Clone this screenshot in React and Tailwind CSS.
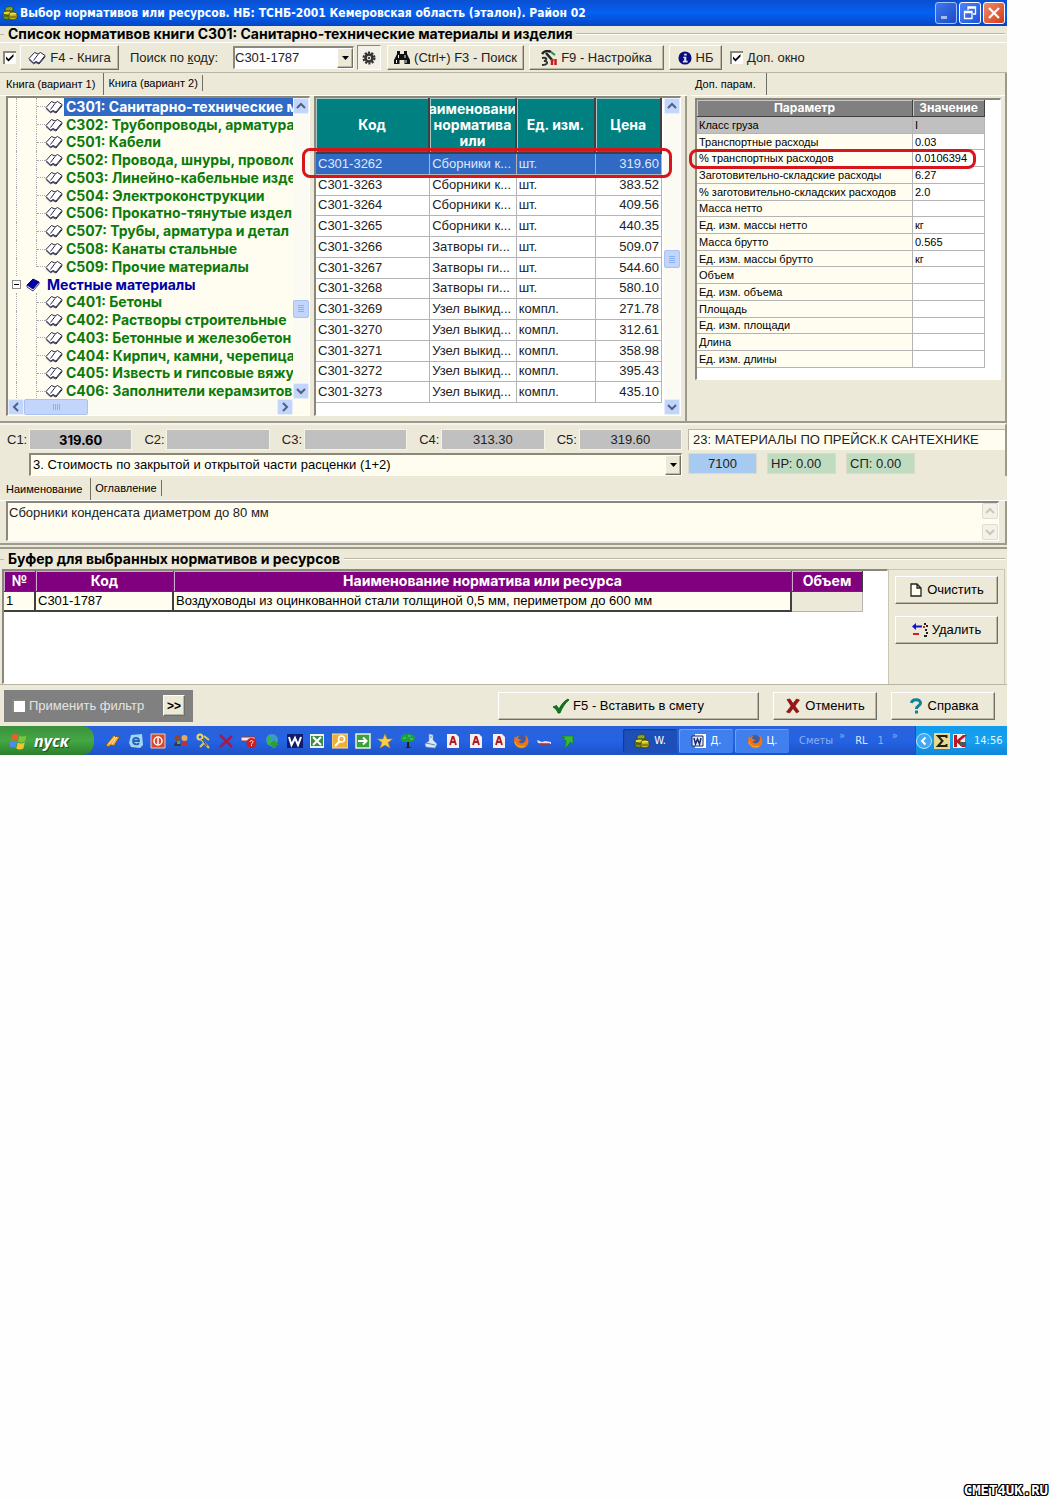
import { useState } from "react";

const TREE_TOP = [
  "С301: Санитарно-технические м",
  "С302: Трубопроводы, арматура",
  "С501: Кабели",
  "С502: Провода, шнуры, проволо",
  "С503: Линейно-кабельные изде",
  "С504: Электроконструкции",
  "С506: Прокатно-тянутые издел",
  "С507: Трубы, арматура и детал",
  "С508: Канаты стальные",
  "С509: Прочие материалы",
];

const TREE_LOCAL = [
  "С401: Бетоны",
  "С402: Растворы строительные",
  "С403: Бетонные и железобетон",
  "С404: Кирпич, камни, черепица",
  "С405: Известь и гипсовые вяжу",
  "С406: Заполнители керамзитов",
];

const ROWS = [
  ["С301-3262", "Сборники к...", "шт.", "319.60"],
  ["С301-3263", "Сборники к...", "шт.", "383.52"],
  ["С301-3264", "Сборники к...", "шт.", "409.56"],
  ["С301-3265", "Сборники к...", "шт.", "440.35"],
  ["С301-3266", "Затворы ги...", "шт.", "509.07"],
  ["С301-3267", "Затворы ги...", "шт.", "544.60"],
  ["С301-3268", "Затворы ги...", "шт.", "580.10"],
  ["С301-3269", "Узел выкид...", "компл.", "271.78"],
  ["С301-3270", "Узел выкид...", "компл.", "312.61"],
  ["С301-3271", "Узел выкид...", "компл.", "358.98"],
  ["С301-3272", "Узел выкид...", "компл.", "395.43"],
  ["С301-3273", "Узел выкид...", "компл.", "435.10"],
];

const PARAMS = [
  ["Класс груза", "I"],
  ["Транспортные расходы", "0.03"],
  ["% транспортных расходов", "0.0106394"],
  ["Заготовительно-складские расходы", "6.27"],
  ["% заготовительно-складских расходов", "2.0"],
  ["Масса нетто", ""],
  ["Ед. изм. массы нетто", "кг"],
  ["Масса брутто", "0.565"],
  ["Ед. изм. массы брутто", "кг"],
  ["Объем", ""],
  ["Ед. изм. объема", ""],
  ["Площадь", ""],
  ["Ед. изм. площади", ""],
  ["Длина", ""],
  ["Ед. изм. длины", ""],
];

const COSTS = [
  ["С1:", "319.60"],
  ["С2:", ""],
  ["С3:", ""],
  ["С4:", "313.30"],
  ["С5:", "319.60"],
];

const RAISED =
  "border border-t-white border-l-white border-r-[#716f64] border-b-[#716f64] bg-[#ece9d8] shadow-[inset_-1px_-1px_0_#bab7a6]";
const SUNKEN = "border-t-2 border-l-2 border-b border-r border-t-[#8a887c] border-l-[#8a887c] border-r-white border-b-white";
const BOLD = "font-['Inter','Liberation_Sans',sans-serif] text-[14px] leading-4 font-bold";

export default function App() {
  return (
    <div className="flex min-h-screen flex-col bg-[#fefefe] font-['Liberation_Sans',Arial,sans-serif] text-[13px] leading-4 text-[#222]">
      <div className="mr-[45px] flex flex-col bg-[#ece9d8]">
        <TitleBar />
        <Legend text="Список нормативов книги С301: Санитарно-технические материалы и изделия" />
        <Toolbar />
        <div className="flex">
          <div className="min-w-0 flex-1">
            <Tabs active="Книга (вариант 1)" other="Книга (вариант 2)" />
            <div className="flex h-[327px] gap-1 border-r-2 border-b-2 border-[#9c9a8c] pr-1 pl-1.5">
              <TreePanel />
              <PricePanel />
            </div>
          </div>
          <ParamPanel />
        </div>
        <CostPanel />
        <DescriptionPanel />
        <BufferPanel />
        <BottomBar />
        <TaskBar />
      </div>
      <footer className="mt-auto px-1 pb-0.5 text-right font-['DejaVu_Sans_Mono',monospace] text-[14px] leading-4 font-bold text-white [text-shadow:1px_0_0_#000,-1px_0_0_#000,0_1px_0_#000,0_-1px_0_#000,1px_1px_0_#000,-1px_-1px_0_#000,1px_-1px_0_#000,-1px_1px_0_#000]">
        CMET4UK.RU
      </footer>
    </div>
  );
}

function TitleBar() {
  return (
    <header className="flex h-[26px] items-center gap-0.5 bg-linear-to-b from-[#0a4fd0] via-[#0560f2] to-[#0446c4] pr-0.5 pl-0.5 text-white">
      <CoinsIcon />
      <h1 className="flex-1 truncate font-['DejaVu_Sans_Condensed','DejaVu_Sans',sans-serif] text-[12px] font-bold">
        Выбор нормативов или ресурсов. НБ: ТСНБ-2001 Кемеровская область (эталон). Район 02
      </h1>
      <div className="flex gap-0.5">
        <button type="button" aria-label="Свернуть" className="size-[22px] rounded-[3px] border border-[#a9c0f5] bg-linear-to-br from-[#3f78ee] to-[#1c48c8]">
          <svg viewBox="0 0 20 20" className="size-5"><path d="M5 13h6v3H5z" fill="#9fbcf5" /></svg>
        </button>
        <button type="button" aria-label="Восстановить" className="size-[22px] rounded-[3px] border border-white bg-linear-to-br from-[#4f86f4] to-[#1f50d8]">
          <svg viewBox="0 0 20 20" className="size-5" fill="none" stroke="#fff" strokeWidth="1.300">
            <path d="M8 7V4h7.500v7H13M8 5h7.500M4.500 8.500h7.500v7H4.500zM4.500 9.500H12" />
          </svg>
        </button>
        <button type="button" aria-label="Закрыть" className="size-[22px] rounded-[3px] border border-white bg-linear-to-br from-[#ee8a6a] to-[#d03a10]">
          <svg viewBox="0 0 20 20" className="size-5" stroke="#fff" strokeWidth="2.200"><path d="M5 5l10 10M15 5L5 15" /></svg>
        </button>
      </div>
    </header>
  );
}

function Legend({ text }) {
  return (
    <div className="flex h-4 items-center gap-1">
      <span className="h-px w-1 bg-[#b9b6a5]" />
      <h2 className={`whitespace-nowrap text-black ${BOLD}`}>{text}</h2>
      <span className="mr-0.5 h-0.5 flex-1 border-t border-[#b9b6a5] bg-white" />
    </div>
  );
}

function CheckBox({ label, children, defaultChecked }) {
  return (
    <label className="flex items-center gap-1">
      <span className="grid size-[13px] shrink-0 place-items-center">
        <input
          type="checkbox"
          aria-label={label}
          defaultChecked={defaultChecked}
          className="peer col-start-1 row-start-1 size-[13px] appearance-none border-t-2 border-l-2 border-[#8a887c] bg-white"
        />
        <svg viewBox="0 0 9 9" className="pointer-events-none col-start-1 row-start-1 hidden size-[9px] peer-checked:block">
          <path d="M1 3.500v2.500l2.500 2.500L8.500 3.500V1L3.500 6z" fill="#000" />
        </svg>
      </span>
      {children}
    </label>
  );
}

function Toolbar() {
  return (
    <div className="flex h-[31px] items-center border-t border-b border-t-white border-b-[#b9b6a5] pl-[3px] whitespace-nowrap">
      <CheckBox label="Показывать книгу" defaultChecked />
      <button type="button" className={`ml-1 flex h-[25px] w-[99px] items-center justify-center gap-1 ${RAISED}`}>
        <BookIcon />
        <span>F4 - Книга</span>
      </button>
      <label htmlFor="code" className="ml-[11px] w-[103px]">
        Поиск по <u>к</u>оду:
      </label>
      <div className={`flex h-[23px] w-[121px] items-center bg-white ${SUNKEN}`}>
        <input id="code" defaultValue="С301-1787" className="min-w-0 flex-1 bg-transparent outline-none" />
        <button type="button" aria-label="Открыть список" className={`flex h-full w-4 items-center justify-center ${RAISED}`}>
          <DownTriangle />
        </button>
      </div>
      <button type="button" aria-label="Параметры поиска" className="ml-[3px] flex h-[25px] w-6 items-center justify-center border border-t-[#8a887c] border-r-white border-b-white border-l-[#8a887c] bg-[#f4f2e8]">
        <GearIcon />
      </button>
      <button type="button" className={`ml-1.5 flex h-[25px] w-[137px] items-center justify-center gap-1 ${RAISED}`}>
        <BinocularsIcon />
        <span>(Ctrl+) F3 - Поиск</span>
      </button>
      <button type="button" className={`ml-[5px] flex h-[25px] w-[135px] items-center justify-center gap-1 ${RAISED}`}>
        <ToolsIcon />
        <span>F9 - Настройка</span>
      </button>
      <button type="button" className={`ml-[5px] flex h-[25px] w-[53px] items-center justify-center gap-1 ${RAISED}`}>
        <InfoIcon />
        <span>НБ</span>
      </button>
      <div className="ml-2">
        <CheckBox label="Доп. окно" defaultChecked>
          <span>
            <u>Д</u>оп. окно
          </span>
        </CheckBox>
      </div>
    </div>
  );
}

function Tabs({ active, other }) {
  return (
    <div className="flex h-[23px] items-start border-b border-white text-[11px] text-black">
      <button type="button" className="h-[22px] border-r border-[#716f64] pr-2 pl-1.5">
        {active}
      </button>
      <button type="button" className="mt-0.5 h-4 border-r border-[#716f64] pr-1 pl-1 leading-3">
        {other}
      </button>
    </div>
  );
}

function ScrollButton({ dir, muted }) {
  const turn = { up: "", down: "rotate-180", left: "-rotate-90", right: "rotate-90" }[dir];
  const names = { up: "Вверх", down: "Вниз", left: "Влево", right: "Вправо" };
  return (
    <button
      type="button"
      aria-label={names[dir]}
      className={`flex size-4 shrink-0 items-center justify-center rounded-xs border ${
        muted ? "border-[#dedccf] bg-[#f3f1e8]" : "border-[#e6edfb] bg-[#c3d5fb]"
      }`}
    >
      <svg viewBox="0 0 10 10" className={`size-2.5 ${turn}`} fill="none" stroke={muted ? "#c9c7ba" : "#4d6185"} strokeWidth="2">
        <path d="M1 7l4-4 4 4" />
      </svg>
    </button>
  );
}

function ScrollBar({ thumb }) {
  return (
    <div className="flex w-4 shrink-0 flex-col bg-[#fbfaf3]">
      <ScrollButton dir="up" />
      <div className="flex flex-1 flex-col">
        <div style={{ flexGrow: thumb }} />
        <div className="flex h-[18px] flex-col items-center justify-center gap-px rounded-xs border border-[#a9c1f3] bg-[#c3d5fb]">
          {[0, 1, 2, 3].map((n) => (
            <span key={n} className="h-px w-1.5 bg-[#8eb0f2]" />
          ))}
        </div>
        <div style={{ flexGrow: 100 - thumb }} />
      </div>
      <ScrollButton dir="down" />
    </div>
  );
}

function TreeItem({ text, selected, last }) {
  return (
    <li className="flex min-h-0 flex-1 items-stretch pl-2">
      <span className="w-5 shrink-0 border-l border-dotted border-[#aaa]" />
      <span className={`w-px shrink-0 border-l border-dotted border-[#aaa] ${last ? "h-1/2" : ""}`} />
      <span className="h-px w-2 shrink-0 self-center border-t border-dotted border-[#aaa]" />
      <span className="flex items-center">
        <BookIcon />
      </span>
      <span
        className={`ml-px flex flex-1 items-center overflow-hidden pl-0.5 whitespace-nowrap ${BOLD} ${
          selected ? "bg-[#316ac5] text-white" : "text-[#0b7a0b]"
        }`}
      >
        {text}
      </span>
    </li>
  );
}

function TreePanel() {
  return (
    <div className={`mb-[5px] flex w-[304px] shrink-0 flex-col bg-[#fffdf0] ${SUNKEN}`}>
      <div className="flex min-h-0 flex-1">
        <ul className="flex h-[302px] min-w-0 flex-1 flex-col overflow-hidden">
          {TREE_TOP.map((text, i) => (
            <TreeItem key={text} text={text} selected={i === 0} last={i === TREE_TOP.length - 1} />
          ))}
          <li className={`flex min-h-0 flex-1 items-center pl-1 text-[#0000a8] ${BOLD}`}>
            <button type="button" aria-label="Свернуть ветку" className="flex size-[9px] items-center justify-center border border-[#8a8a8a] bg-white">
              <span className="h-px w-[5px] bg-black" />
            </button>
            <span className="mr-1 ml-1">
              <BookIcon closed />
            </span>
            Местные материалы
          </li>
          {TREE_LOCAL.map((text) => (
            <TreeItem key={text} text={text} />
          ))}
        </ul>
        <ScrollBar thumb={74} />
      </div>
      <div className="mr-4 flex h-4 bg-[#fbfaf3]">
        <ScrollButton dir="left" />
        <div className="flex w-16 items-center justify-center gap-px rounded-xs border border-[#a9c1f3] bg-[#c3d5fb]">
          {[0, 1, 2, 3].map((n) => (
            <span key={n} className="h-1.5 w-px bg-[#8eb0f2]" />
          ))}
        </div>
        <div className="flex-1" />
        <ScrollButton dir="right" />
      </div>
    </div>
  );
}

function PricePanel() {
  const [current, setCurrent] = useState(0);
  const head = `border-r-2 border-b-2 border-[#404040] bg-[#008080] p-0 text-center text-white shadow-[inset_1px_1px_0_#a8c8c8] ${BOLD}`;

  return (
    <div className={`relative mb-[5px] flex min-w-0 flex-1 bg-white ${SUNKEN}`}>
      <div className="min-w-0 flex-1">
        <table className="h-[305px] w-full table-fixed border-separate border-spacing-0">
          <colgroup>
            <col className="w-[33%]" />
            <col className="w-[25%]" />
            <col className="w-[23%]" />
            <col className="w-[19%]" />
          </colgroup>
          <thead>
            <tr className="h-14">
              <th className={head}>Код</th>
              <th className={head}>
                <div className="flex flex-col items-center overflow-hidden whitespace-nowrap">
                  <span>аименовани</span>
                  <span>норматива</span>
                  <span>или</span>
                </div>
              </th>
              <th className={head}>Ед. изм.</th>
              <th className={head}>Цена</th>
            </tr>
          </thead>
          <tbody>
            {ROWS.map((row, i) => (
              <tr key={row[0]} onClick={() => setCurrent(i)} className={i === current ? "bg-[#316ac5] text-[#dfe8f8]" : ""}>
                {row.map((cell, c) => (
                  <td
                    key={c}
                    className={`overflow-hidden border-r border-b border-[#b4b4b4] px-0.5 py-0 whitespace-nowrap ${c === 3 ? "text-right" : ""}`}
                  >
                    {cell}
                  </td>
                ))}
              </tr>
            ))}
          </tbody>
        </table>
      </div>
      <div className="flex pl-0.5">
        <ScrollBar thumb={51} />
      </div>
      <div className="pointer-events-none absolute top-[50px] -left-3.5 h-[30px] w-[370px] rounded-lg border-3 border-[#d8141c]" />
    </div>
  );
}

function ParamPanel() {
  const head =
    "h-[17px] border-r border-b border-[#404040] bg-[#808080] p-0 text-center font-['Inter','Liberation_Sans',sans-serif] text-[12px] font-bold text-white shadow-[inset_1px_1px_0_#c8c8c8]";

  return (
    <div className="flex w-[320px] shrink-0 flex-col border-r-2 border-b-2 border-[#9c9a8c] pl-1">
      <div className="flex h-[23px] border-b border-white text-[11px] text-black">
        <button type="button" className="border-r border-[#716f64] pr-2.5 pl-1">
          Доп. парам.
        </button>
      </div>
      <div className={`relative mt-0.5 mr-1 ml-1 h-[282px] bg-white ${SUNKEN}`}>
        <table className="mr-4 h-[268px] w-[288px] table-fixed border-separate border-spacing-0 text-[11px] leading-3 text-black">
          <colgroup>
            <col className="w-3/4" />
            <col className="w-1/4" />
          </colgroup>
          <thead>
            <tr>
              <th className={head}>Параметр</th>
              <th className={head}>Значение</th>
            </tr>
          </thead>
          <tbody>
            {PARAMS.map(([name, value], i) => (
              <tr key={name} className={i === 0 ? "bg-[#c0c0c0]" : ""}>
                <td className={`border-r border-b border-[#b4b4b4] px-0.5 py-0 whitespace-nowrap ${i === 0 ? "" : "bg-[#fffdf0]"}`}>{name}</td>
                <td className="border-r border-b border-[#b4b4b4] px-0.5 py-0">{value}</td>
              </tr>
            ))}
          </tbody>
        </table>
        <div className="pointer-events-none absolute top-[49px] -left-2 h-5 w-[287px] rounded-lg border-3 border-[#d8141c]" />
      </div>
    </div>
  );
}

function CostPanel() {
  return (
    <div className="flex border-t-2 border-r-2 border-t-[#f6f4ea] border-r-[#9c9a8c] pt-1">
      <div className="flex min-w-0 flex-1 flex-col gap-[3px] pr-1.5 pl-[7px]">
        <div className="flex gap-3">
          {COSTS.map(([label, value], i) => (
            <div key={label} className="flex flex-1 items-center">
              <span className="w-[22px] shrink-0">{label}</span>
              <output
                className={`h-[21px] flex-1 border border-[#f6f4ea] bg-[#c0c0c0] text-center leading-5 ${
                  i === 0 ? "font-['Inter','Liberation_Sans',sans-serif] font-bold text-black" : ""
                }`}
              >
                {value}
              </output>
            </div>
          ))}
        </div>
        <div className={`ml-[22px] flex h-[23px] items-center bg-[#fffdf0] ${SUNKEN}`}>
          <select aria-label="Вид стоимости" className="h-full min-w-0 flex-1 appearance-none bg-transparent pl-0.5 text-black">
            <option>3. Стоимость по закрытой и открытой части расценки (1+2)</option>
          </select>
          <span className={`flex h-full w-4 items-center justify-center ${RAISED}`}>
            <DownTriangle />
          </span>
        </div>
      </div>
      <div className="flex w-[317px] shrink-0 flex-col gap-[3px]">
        <div className="h-[21px] border-t border-l border-[#b9b6a5] bg-[#fffdf0] pl-1 leading-5 whitespace-nowrap">23: МАТЕРИАЛЫ ПО ПРЕЙСК.К САНТЕХНИКЕ</div>
        <div className="flex gap-2.5 leading-5">
          <output className="h-[21px] w-[69px] border border-[#dcdacb] bg-[#a6caf0] text-center">7100</output>
          <output className="h-[21px] w-[69px] border border-[#dcdacb] bg-[#c0dcc0] pl-[3px]">НР: 0.00</output>
          <output className="h-[21px] w-[69px] border border-[#dcdacb] bg-[#c0dcc0] pl-[3px]">СП: 0.00</output>
        </div>
      </div>
    </div>
  );
}

function DescriptionPanel() {
  return (
    <div className="border-b-2 border-[#9c9a8c] pt-0.5 pb-0.5">
      <Tabs active="Наименование" other="Оглавление" />
      <div className="border-r-2 border-b-2 border-[#9c9a8c] pr-1.5 pb-0.5 pl-1.5">
        <div className={`flex h-10 bg-[#fffdf0] ${SUNKEN}`}>
          <textarea
            aria-label="Наименование"
            defaultValue="Сборники конденсата диаметром до 80 мм"
            className="flex-1 resize-none overflow-hidden bg-transparent pt-0.5 pl-px outline-none"
          />
          <div className="flex flex-col justify-between">
            <ScrollButton dir="up" muted />
            <ScrollButton dir="down" muted />
          </div>
        </div>
      </div>
    </div>
  );
}

function BufferPanel() {
  const head = `h-[21px] border-r border-b border-[#404040] bg-[#800080] p-0 text-center text-white shadow-[inset_1px_1px_0_#d0a8d0] ${BOLD}`;
  const cell = "h-5 border-r-2 border-b-2 border-[#404040] bg-[#fffdf0] px-0.5 py-0 whitespace-nowrap text-black";

  return (
    <section className="border-b border-[#b9b6a5] pt-0.5">
      <Legend text="Буфер для выбранных нормативов и ресурсов" />
      <div className="flex">
        <div className={`mt-0.5 ml-0.5 h-[115px] min-w-0 flex-1 bg-white ${SUNKEN}`}>
          <div className="pr-6">
            <table className="w-full table-fixed border-separate border-spacing-0">
              <colgroup>
                <col className="w-8" />
                <col className="w-[138px]" />
                <col />
                <col className="w-[71px]" />
              </colgroup>
              <thead>
                <tr>
                  <th className={head}>№</th>
                  <th className={head}>Код</th>
                  <th className={head}>Наименование норматива или ресурса</th>
                  <th className={head}>Объем</th>
                </tr>
              </thead>
              <tbody>
                <tr>
                  <td className={cell}>1</td>
                  <td className={cell}>С301-1787</td>
                  <td className={cell}>Воздуховоды из оцинкованной стали толщиной 0,5 мм, периметром до 600 мм</td>
                  <td className="border-r border-b border-[#b4b4b4] bg-[#ece9d8]" />
                </tr>
              </tbody>
            </table>
          </div>
        </div>
        <div className="mt-0.5 mr-0.5 flex w-[117px] shrink-0 flex-col gap-3 border-t border-r border-l border-[#c9c6b5] px-1.5 pt-1.5">
          <button type="button" className={`flex h-7 items-center justify-center gap-1 text-black ${RAISED}`}>
            <PageIcon />
            <span>Очистить</span>
          </button>
          <button type="button" className={`flex h-7 items-center justify-center gap-1 text-black ${RAISED}`}>
            <RemoveIcon />
            <span>Удалить</span>
          </button>
        </div>
      </div>
    </section>
  );
}

function BottomBar() {
  return (
    <div className="flex h-[41px] items-center pr-3 pl-1 text-black">
      <div className="flex h-8 w-[189px] items-center bg-[#808080] pr-2 pl-2 text-[#e4e4e4]">
        <CheckBox label="Применить фильтр">
          <span>Применить фильтр</span>
        </CheckBox>
        <button type="button" className={`ml-auto h-[21px] w-[22px] text-[12px] leading-4 font-bold text-black ${RAISED}`}>
          &gt;&gt;
        </button>
      </div>
      <div className="ml-auto flex gap-3.5">
        <button type="button" className={`flex h-7 w-[261px] items-center justify-center gap-1 ${RAISED}`}>
          <svg viewBox="0 0 16 16" className="size-4">
            <path d="M0 9l3.500-1.500L6 11C8 7 11 3 15 1l1 1C12 5 9 10 7 15H5C4 12 2.500 10.500 0 9z" fill="#0b7d1c" stroke="#07540f" strokeWidth=".8" />
          </svg>
          <span>F5 - Вставить в смету</span>
        </button>
        <button type="button" className={`flex h-7 w-[104px] items-center justify-center gap-1 ${RAISED}`}>
          <svg viewBox="0 0 16 16" className="size-4" fill="#a01212" stroke="#6c0808" strokeWidth=".6">
            <path d="M2 1.500l3-.5 3 4.500L11.500 1l3 1L10 8l4 5.500-2.500 1.500L8 10.500 4.500 15 1.500 14 6 8z" />
          </svg>
          <span>Отменить</span>
        </button>
        <button type="button" className={`flex h-7 w-[104px] items-center justify-center gap-1 ${RAISED}`}>
          <svg viewBox="0 0 16 16" className="size-4" fill="none" stroke="#0d8496" strokeWidth="3">
            <path d="M3.500 5c.5-4.500 9-4.500 9 0 0 3-4 2.500-4 6M8.500 12.500v3" />
          </svg>
          <span>Справка</span>
        </button>
      </div>
    </div>
  );
}

function TaskButton({ children, active }) {
  return (
    <button
      type="button"
      className={`flex h-6 w-[54px] items-center justify-center gap-1 rounded-xs ${
        active ? "bg-[#1c4fb8] shadow-[inset_1px_1px_1px_#123a90]" : "bg-[#3f80ee] shadow-[inset_1px_1px_0_#6ca0f5]"
      }`}
    >
      {children}
    </button>
  );
}

function TaskBar() {
  return (
    <nav className="flex h-[29px] items-center bg-linear-to-b from-[#2a62d8] via-[#2463e4] to-[#1e52c6] font-['DejaVu_Sans_Condensed','DejaVu_Sans',sans-serif] text-[11px] text-white">
      <button
        type="button"
        className="flex h-full w-[94px] shrink-0 items-center gap-1.5 rounded-r-xl bg-linear-to-b from-[#3c8f3c] via-[#44a844] to-[#2c7f2c] pl-2.5 font-['Open_Sans',sans-serif] text-[16px] font-bold italic [text-shadow:1px_1px_1px_#1d4d1d]"
      >
        <WindowsIcon />
        <span>пуск</span>
      </button>
      <div className="ml-[11px] flex w-[470px] shrink-0 justify-between">
        {QUICK_ICONS.map((icon, i) => (
          <svg key={i} viewBox="0 0 16 16" className="size-4">
            {icon}
          </svg>
        ))}
      </div>
      <div className="ml-auto flex gap-0.5">
        <TaskButton active>
          <CoinsIcon />
          <span>W.</span>
        </TaskButton>
        <TaskButton>
          <svg viewBox="0 0 16 16" className="size-4">
            <path d="M4 1h11v14H4z" fill="#fff" />
            <path d="M1 3h11v10H1z" fill="#e8eefb" stroke="#1a2a6c" />
            <path d="M3 5l1.500 6L6.500 6l2 5L10 5" fill="none" stroke="#1a2a6c" strokeWidth="1.500" />
          </svg>
          <span>Д.</span>
        </TaskButton>
        <TaskButton>
          <svg viewBox="0 0 16 16" className="size-4">
            {FIREFOX}
          </svg>
          <span>Ц.</span>
        </TaskButton>
      </div>
      <div className="flex w-[126px] shrink-0 items-center pl-2.5 text-[#8fb0f0]">
        <span>Сметы</span>
        <span className="ml-1.5 pb-2.5">»</span>
        <span className="ml-2.5 text-[#dde8fc]">RL</span>
        <span className="ml-2.5">1</span>
        <span className="ml-2 pb-2.5">»</span>
      </div>
      <div className="flex h-full w-[92px] shrink-0 items-center gap-0.5 border-l border-[#0c5cc0] bg-linear-to-b from-[#129aec] via-[#18a0f0] to-[#0f86d8] text-[#e8f4fd]">
        <svg viewBox="0 0 16 16" className="size-4">
          <circle cx="8" cy="8" r="7.500" fill="#3fa9f5" stroke="#bfe2fb" />
          <path d="M9.500 4.500L6 8l3.500 3.500" fill="none" stroke="#fff" strokeWidth="2" />
        </svg>
        <svg viewBox="0 0 16 16" className="size-4">
          <path d="M0 0h16v16H0z" fill="#e8d890" />
          <path d="M12.500 5V3H4l4.500 5L4 13h8.500v-2" fill="none" stroke="#221" strokeWidth="2" />
        </svg>
        <svg viewBox="0 0 16 16" className="size-4">
          <path d="M1 1h12v14H1z" fill="#eee" />
          <path d="M2 2h3v5l6-5h4L8 8l6 6h-4L5 9.500V14H2z" fill="#c4141c" />
          <path d="M8 9h6v4H8z" fill="#555" />
        </svg>
        <span className="ml-1">14:56</span>
      </div>
    </nav>
  );
}

function CoinsIcon() {
  return (
    <svg viewBox="0 0 16 16" className="size-4 shrink-0" stroke="#33400a" strokeWidth=".8">
      <path d="M3 4c1-3 7-3 8-1v3H3z" fill="#8aa428" />
      <path d="M1 8h8v6c-2 1.500-7 1-8-1z" fill="#6d8f1c" />
      <ellipse cx="6" cy="8" rx="5" ry="2" fill="#e8d430" />
      <ellipse cx="11" cy="9" rx="4" ry="2" fill="#f2de3c" />
      <path d="M7 10v4c2 1.500 7 1 8-1V9" fill="#c8b020" />
      <path d="M8 12h6M2 11h4" />
    </svg>
  );
}

function BookIcon({ closed }) {
  return (
    <svg viewBox="0 0 18 14" className="h-3.5 w-[18px]" strokeWidth="1">
      {closed ? (
        <>
          <path d="M2 7l6-6 6 3-6 7z" fill="#0000a8" stroke="#00006c" />
          <path d="M2 7v2l6 4 6-7V4l-6 7z" fill="#fff" stroke="#00006c" strokeWidth=".8" />
        </>
      ) : (
        <>
          <path d="M1 7.500L6.500 1.500 10 3l2.500-1.500L17 4.500 11 12l-3-1.500L5.500 12z" fill="#fff" stroke="#26264a" strokeLinejoin="round" />
          <path d="M10 3.500L5.500 9.500M1 8.500l4.500 4.200 2.500-1.200 3 1.500 6.300-7.500" fill="none" stroke="#26264a" />
        </>
      )}
    </svg>
  );
}

function DownTriangle() {
  return (
    <svg viewBox="0 0 7 4" className="h-1 w-[7px]">
      <path d="M0 0h7L3.500 4z" fill="#000" />
    </svg>
  );
}

function GearIcon() {
  return (
    <svg viewBox="0 0 16 16" className="size-3.5" fill="none" stroke="#333">
      <circle cx="8" cy="8" r="6.200" strokeWidth="2.500" strokeDasharray="2.400 1.500" />
      <circle cx="8" cy="8" r="4" strokeWidth="3" />
      <circle cx="8" cy="8" r="1" fill="#333" />
    </svg>
  );
}

function BinocularsIcon() {
  return (
    <svg viewBox="0 0 16 16" className="size-4" fill="#111">
      <path d="M3 1h3v3h4V1h3v3l3 6v4h-5.500v-4h-5v4H0v-4l3-6z" />
      <path d="M2 10h1v3H2zM11.500 10h1v3h-1zM4 5h1v3H4zM10.500 5h1v3h-1z" fill="#eee" />
    </svg>
  );
}

function ToolsIcon() {
  return (
    <svg viewBox="0 0 16 16" className="size-4" fill="none">
      <path d="M1 4c2-3 6-4 9-2" stroke="#222" strokeWidth="2.500" />
      <path d="M5 3l7 8" stroke="#222" strokeWidth="2.500" />
      <path d="M1 8c5-1 6 2 2 3 5 0 4 4-2 4" stroke="#333" strokeWidth="1.800" />
      <path d="M10 2l4 3" stroke="#2c8c3c" strokeWidth="2" />
      <path d="M11 9v6M14.500 9v6" stroke="#c41c1c" strokeWidth="2.500" />
    </svg>
  );
}

function InfoIcon() {
  return (
    <svg viewBox="0 0 16 16" className="size-3.5">
      <circle cx="8" cy="8" r="7.500" fill="#0a0a80" />
      <path d="M7 3h3v2H7zM6 6.500h3.500V11H11v2H5.500v-2H7V8H6z" fill="#dde" />
    </svg>
  );
}

function PageIcon() {
  return (
    <svg viewBox="0 0 14 14" className="size-3.5">
      <path d="M2 1h6l4 4v8H2zM8 1v4h4" fill="#fffff0" stroke="#222" strokeWidth="1.300" />
    </svg>
  );
}

function RemoveIcon() {
  return (
    <svg viewBox="0 0 16 16" className="size-4">
      <path d="M0 4.500L4 1v2.500h6v2H4V8z" fill="#1414c4" />
      <path d="M1 11h6v2H1z" fill="#d41c2c" />
      <path d="M12 1h2v2h-2zM14 3h2v2h-2zM13 7h2v2h-2zM14 10h2v2h-2zM12 13h3v2h-3z" fill="#222" />
      <path d="M11 4h2v2h-2z" fill="#d41c2c" />
    </svg>
  );
}

function WindowsIcon() {
  return (
    <svg viewBox="0 0 18 18" className="size-[18px]">
      <path d="M2 3c2-1.500 4-1.500 6.500 0L7 9C5 7.500 3 7.500.5 9z" fill="#e8602c" />
      <path d="M9.500 3.500c2 1.300 4.500 1.300 7 0l-1.500 6c-2.500 1.300-5 1.300-7 0z" fill="#7cc43c" />
      <path d="M.3 10c2.500-1.500 4.500-1.300 6.500 0l-1.500 6c-2-1.500-4-1.500-6 0z" fill="#4c8cf0" />
      <path d="M7.800 10.500c2 1.300 4.500 1.300 7 0l-1.500 6c-2.500 1.300-5 1.300-7 0z" fill="#f4c430" />
    </svg>
  );
}

const FIREFOX = (
  <>
    <circle cx="8" cy="8" r="6" fill="#3c5ca8" />
    <path d="M2 3C0 8 1 13 6 15c5 1.500 9-2 9.500-6C15.500 6 14 3 12 2c1 2 1.500 5-.5 7-2 2-5 1.500-6-.5l3-1C7 6 6 6 5 6c0-1 .5-2 1.500-2.500C5 3 3.500 3.500 3 5z" fill="#e8741c" />
    <path d="M2 9c1 4 6 6 10 4" fill="none" stroke="#f8b830" />
  </>
);

const ACROBAT = (
  <>
    <path d="M2 1h9l3 3v11H2z" fill="#f4f0f0" />
    <path d="M5 12l2.500-8h1L11 12M6 9h4" fill="none" stroke="#b01c24" strokeWidth="1.800" />
  </>
);

// quick launch strip, left to right
const QUICK_ICONS = [
  <>
    <path d="M1 12L9 2l2 2 4-1-6 10-3-1-3 2z" fill="#f0a838" stroke="#7a4a10" strokeWidth=".8" />
    <path d="M4 11l6-7M7 11l5-7" stroke="#fff0c0" />
  </>,
  <>
    <path d="M3 2l11-1 1 11-3 3-9-1-2-4z" fill="#a8d4f4" />
    <path d="M5 8h6c0-4-6-4-6 0s5 4 6 2" fill="none" stroke="#1c68b8" strokeWidth="1.800" />
  </>,
  <>
    <path d="M1 1h14v14H1z" fill="#d8482c" stroke="#f4c8b8" />
    <circle cx="8" cy="8" r="4" fill="none" stroke="#fff" strokeWidth="1.500" />
    <path d="M8 5v6" stroke="#fff" strokeWidth="1.500" />
  </>,
  <>
    <circle cx="4.500" cy="5" r="3" fill="#8c4a2c" />
    <circle cx="11.500" cy="5" r="3" fill="#e8a860" />
    <path d="M1 13c0-6 7-6 7 0z" fill="#2c3c4c" />
    <path d="M8 13c0-6 7-6 7 0z" fill="#c83030" />
    <path d="M4 8h3v3H4z" fill="#48b048" />
  </>,
  <>
    <circle cx="4" cy="4" r="2.500" fill="none" stroke="#f0d860" strokeWidth="2" />
    <path d="M5 6l8 9M9 9l-5 5M8 3l5 4" stroke="#e0c84c" strokeWidth="2" />
    <path d="M6 6l5 7" stroke="#333" />
  </>,
  <path d="M2 2l12 12M14 3L2 14" stroke="#a01c50" strokeWidth="2.500" />,
  <>
    <path d="M0 4h14v4H0z" fill="#f0e8e8" stroke="#b03030" />
    <circle cx="10.500" cy="10" r="5" fill="#d01c1c" />
    <path d="M9 9c0-2 3-2 3 0 0 1-1.500 1-1.500 2.500M10.500 12v1" fill="none" stroke="#fff" />
  </>,
  <>
    <circle cx="8" cy="7" r="6" fill="#3c9cc8" />
    <path d="M4 2c3 1 4 4 2 6l4 3 3-4c1 3-1 6-4 7L3 11z" fill="#38b448" />
    <path d="M10 7l5 5h-3v3H8v-3H5z" fill="#2c9c3c" />
  </>,
  <>
    <path d="M0 1h16v14H0z" fill="#101c6c" />
    <path d="M2 4l2.500 8L8 5l3 7 3-8" fill="none" stroke="#fff" strokeWidth="2" />
  </>,
  <>
    <path d="M1 1h14v14H1z" fill="#e8f4e8" />
    <path d="M2 3h12v10H2z" fill="#3c8c4c" />
    <path d="M4 4l8 8M12 4l-8 8" stroke="#fff" strokeWidth="2" />
  </>,
  <>
    <path d="M0 1h16v14H0z" fill="#f0b038" stroke="#f8e0a0" />
    <circle cx="9.500" cy="6" r="3" fill="none" stroke="#fff" strokeWidth="1.500" />
    <path d="M7.500 8.500L3 13" stroke="#fff" strokeWidth="2" />
  </>,
  <>
    <path d="M1 1h14v14H1z" fill="#3ca03c" stroke="#e8f4e0" strokeWidth="1.500" />
    <path d="M3 8h8M8 4.500L11.500 8 8 11.500" fill="none" stroke="#fff" strokeWidth="2" />
  </>,
  <path d="M8 1l2 5h5.500L11 9.500l2 5.500-5-3-5 3 2-5.500L.5 6H6z" fill="#f8d048" stroke="#c08818" strokeWidth=".6" />,
  <>
    <path d="M7 8h2v6l3 1H5l2-1z" fill="#2c1c0c" />
    <path d="M1 4c1-3 5-3 7-3s6 0 7 4c0 3-3 4-6 4H5C2 9 0 7 1 4z" fill="#1ca03c" />
    <path d="M3 5h3M8 3h3M10 6h3" stroke="#60d868" />
  </>,
  <>
    <path d="M6 1l4 1v5l4 4-2 4-9-1-1-3 4-3z" fill="#d8e8f8" stroke="#7c98b8" strokeWidth=".6" />
    <path d="M3 10l9 2M7 4h2" stroke="#5c88b8" />
  </>,
  ACROBAT,
  ACROBAT,
  ACROBAT,
  FIREFOX,
  <>
    <path d="M1 7l5 2 3-1 6 1v2H8l-6-1z" fill="#f0e0e0" />
    <path d="M4 11h10" stroke="#c02838" strokeWidth="1.500" />
  </>,
  <path d="M3 3h11v8l-3-2c-1 3-3 5-6 6 2-3 2-5 2-8L3 7l3-2z" fill="#38b838" stroke="#147814" strokeWidth=".6" />,
];
